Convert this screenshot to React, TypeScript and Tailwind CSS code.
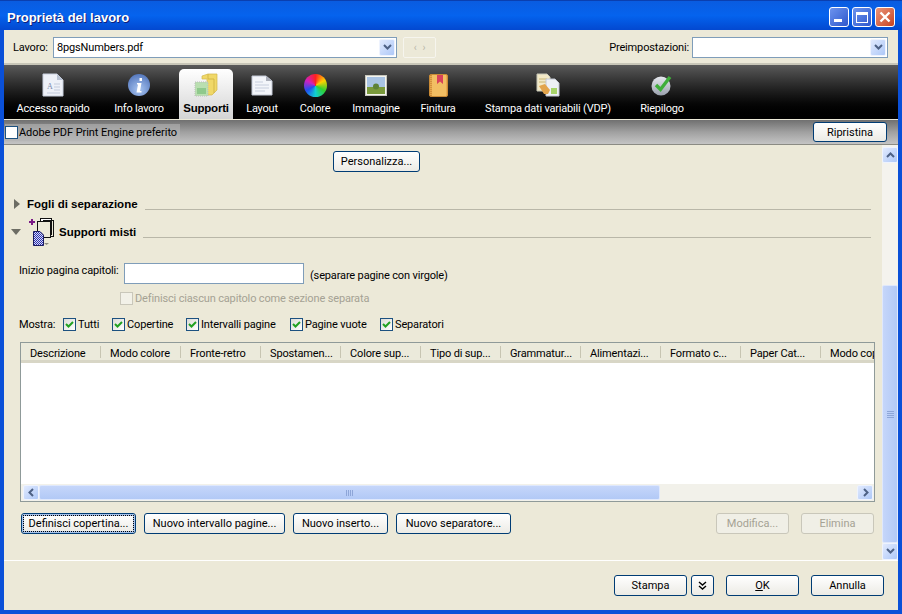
import type { ReactNode } from 'react'

const columns = ['Descrizione', 'Modo colore', 'Fronte-retro', 'Spostamen...', 'Colore sup...', 'Tipo di sup...', 'Grammatur...', 'Alimentazi...', 'Formato c...', 'Paper Cat...', 'Modo cop']

function XpButton({ children, className = '', disabled = false, focused = false }: { children: ReactNode; className?: string; disabled?: boolean; focused?: boolean }) {
  if (disabled) {
    return (
      <button className={`h-[21px] rounded-[3px] border border-[#c9c7ba] bg-[#f0efe6] text-[#a5a294] text-center tracking-normal ${className}`}>{children}</button>
    )
  }
  return (
    <button className={`h-[21px] rounded-[3px] border border-[#003c74] bg-gradient-to-b from-white to-[#ecebe5] text-black text-center tracking-normal ${focused ? 'outline-1 -outline-offset-3 outline-dotted outline-black shadow-[inset_0_0_0_2px_#a9c3ea]' : ''} ${className}`}>{children}</button>
  )
}

function Chevron({ dir }: { dir: 'up' | 'down' | 'left' | 'right' }) {
  const d = { down: 'M1 2 L4.5 5.5 L8 2', up: 'M1 6 L4.5 2.5 L8 6', left: 'M6 1 L2.5 4.5 L6 8', right: 'M3 1 L6.5 4.5 L3 8' }[dir]
  return (
    <svg width="9" height="9" viewBox="0 0 9 9">
      <path d={d} fill="none" stroke="#4d6185" strokeWidth="2" />
    </svg>
  )
}

function ArrowBtn({ dir, className = '' }: { dir: 'up' | 'down' | 'left' | 'right'; className?: string }) {
  return (
    <div className={`flex items-center justify-center rounded-[2px] border border-[#eef3fe] bg-gradient-to-br from-[#e1eafe] to-[#aec8f7] shrink-0 ${className}`}>
      <Chevron dir={dir} />
    </div>
  )
}

function Combo({ className = '', children }: { className?: string; children?: ReactNode }) {
  return (
    <div className={`h-[21px] flex items-center bg-white border border-[#7f9db9] pl-[3px] pr-px ${className}`}>
      <span className="flex-1">{children}</span>
      <ArrowBtn dir="down" className="w-[16px] h-[17px]" />
    </div>
  )
}

function Check({ label, className }: { label: string; className: string }) {
  return (
    <div className={`flex items-center gap-[2px] shrink-0 ${className}`}>
      <div className="w-[13px] h-[13px] border border-[#1c5180] bg-gradient-to-br from-[#dcdcd7] to-white flex items-center justify-center">
        <svg width="9" height="9" viewBox="0 0 9 9">
          <path d="M1 4 L3.5 6.5 L8 2" fill="none" stroke="#21a121" strokeWidth="2" />
        </svg>
      </div>
      <span>{label}</span>
    </div>
  )
}

function IconDocA() {
  return (
    <svg width="22" height="24" viewBox="0 0 22 24">
      <path d="M1 1 H15 L21 7 V23 H1 Z" fill="#eef1f8" stroke="#c9d0de" />
      <path d="M15 1 V7 H21 Z" fill="#b9c2d2" />
      <text x="5" y="16" fontSize="8" fontFamily="Liberation Serif, serif" fill="#7b8cae">A</text>
      <path d="M12 11 H18 M12 14 H18 M12 17 H18 M5 20 H18" stroke="#c3cbdc" />
    </svg>
  )
}

function IconInfo() {
  return (
    <svg width="24" height="24" viewBox="0 0 24 24">
      <defs>
        <radialGradient id="inf" cx="50%" cy="70%" r="70%">
          <stop offset="0" stopColor="#a9c6f2" />
          <stop offset="1" stopColor="#5578bd" />
        </radialGradient>
      </defs>
      <circle cx="12" cy="12" r="11" fill="url(#inf)" />
      <path d="M12.5 5 h2.5 v3 h-2.5 Z M10 10 h4.5 l-1.5 8 h1.5 v1.5 h-5 l1.5-8 h-1 Z" fill="#fff" />
    </svg>
  )
}

function IconSupports() {
  return (
    <svg width="24" height="24" viewBox="0 0 24 24">
      <path d="M8 3 L14 1 H23 V17 L18 22 H13 V6 H8 Z" fill="#f0d868" stroke="#d2b84a" strokeWidth="0.7" />
      <path d="M14 1 V6 L20 6 V20" fill="none" stroke="#c9ad3e" strokeWidth="0.7" />
      <rect x="1" y="9" width="13" height="14" fill="#b9dfb0" stroke="#bcbcbc" strokeDasharray="1 1" />
      <rect x="3" y="15" width="9" height="6" fill="#8fc98c" />
    </svg>
  )
}

function IconLayout() {
  return (
    <svg width="22" height="21" viewBox="0 0 22 21">
      <path d="M1 1 H15 L21 6 V20 H1 Z" fill="#f3f5fa" stroke="#c2c8d5" />
      <path d="M15 1 V6 H21 Z" fill="#a9adb8" />
      <path d="M4 7 H12 M4 10 H18 M4 13 H18 M4 16 H14" stroke="#c7cedd" />
    </svg>
  )
}

function IconImage() {
  return (
    <svg width="22" height="21" viewBox="0 0 22 21">
      <rect x="0.5" y="0.5" width="21" height="20" fill="#f4f4ee" stroke="#c7c7bd" />
      <rect x="2" y="2" width="18" height="17" fill="#a9c4e4" />
      <rect x="2" y="12" width="18" height="7" fill="#7a9a3c" />
      <circle cx="11" cy="11.5" r="3" fill="#5e8238" />
    </svg>
  )
}

function IconBook() {
  return (
    <svg width="19" height="23" viewBox="0 0 19 23">
      <rect x="0.5" y="0.5" width="18" height="22" rx="1.5" fill="#e9a94e" stroke="#c98a35" />
      <rect x="3" y="1" width="14" height="21" fill="#f2be63" />
      <path d="M2 1 V22" stroke="#b97a2c" strokeDasharray="1 1" />
      <path d="M8 1 H14 V10 L11 7.5 L8 10 Z" fill="#d8425a" />
    </svg>
  )
}

function IconVdp() {
  return (
    <svg width="24" height="24" viewBox="0 0 24 24">
      <path d="M1 1 H11 L14 4 V18 H1 Z" fill="#f3e9c6" stroke="#c8c8b8" />
      <path d="M3 6 H11 M3 9 H11" stroke="#c9b674" />
      <path d="M10 6 H19 L23 10 V23 H10 Z" fill="#eef1f6" stroke="#c4c8d2" />
      <rect x="15" y="15" width="6" height="6" fill="#a8d46a" />
      <path d="M3 13 L9 11 L14 17 L12 21 L8 21 Z" fill="#e2a44c" />
    </svg>
  )
}

function IconCheck() {
  return (
    <svg width="22" height="22" viewBox="0 0 22 22">
      <defs>
        <linearGradient id="chk" x1="0" y1="0" x2="0" y2="1">
          <stop offset="0" stopColor="#e6e8ee" />
          <stop offset="1" stopColor="#9aa1ad" />
        </linearGradient>
      </defs>
      <circle cx="10" cy="12" r="9.5" fill="url(#chk)" />
      <path d="M5 11 L9.5 15.5 L19 3" fill="none" stroke="#3fae3a" strokeWidth="3.4" />
    </svg>
  )
}

function IconMixed() {
  return (
    <svg width="28" height="28" viewBox="0 0 28 28">
      <defs>
        <pattern id="dither" width="2" height="2" patternUnits="userSpaceOnUse">
          <rect width="2" height="2" fill="#d8dcf4" />
          <rect width="1" height="1" fill="#2a2fb0" />
          <rect x="1" y="1" width="1" height="1" fill="#2a2fb0" />
        </pattern>
      </defs>
      <path d="M1 3 H3 V1 H5 V3 H7 V5 H5 V7 H3 V5 H1 Z" fill="#7b1a86" />
      <rect x="12.5" y="0.5" width="11" height="16" fill="#fff" stroke="#111" />
      <rect x="15.5" y="2.5" width="10" height="16" fill="none" stroke="#111" />
      <rect x="9.5" y="3.5" width="13" height="16" fill="#ece9d8" stroke="#111" />
      <path d="M5.5 13.5 H12 L15.5 17 V27.5 H5.5 Z" fill="url(#dither)" stroke="#1b1b60" />
      <path d="M16 25 H21 L18.5 27 Z" fill="#8a8a80" />
    </svg>
  )
}

const tabs = [
  { label: 'Accesso rapido', w: 'w-[98px]', icon: <IconDocA /> },
  { label: 'Info lavoro', w: 'w-[74px]', icon: <IconInfo /> },
  { label: 'Supporti', w: 'w-[60px]', icon: <IconSupports />, active: true },
  { label: 'Layout', w: 'w-[52px]', icon: <IconLayout /> },
  { label: 'Colore', w: 'w-[54px]', icon: <div className="w-[23px] h-[23px] rounded-full bg-[conic-gradient(#ff2020,#ffd000,#30d030,#10d0d0,#2050f0,#d020c0,#ff2020)]" /> },
  { label: 'Immagine', w: 'w-[68px]', icon: <IconImage /> },
  { label: 'Finitura', w: 'w-[56px]', icon: <IconBook /> },
  { label: 'Stampa dati variabili (VDP)', w: 'w-[164px]', icon: <IconVdp /> },
  { label: 'Riepilogo', w: 'w-[64px]', icon: <IconCheck /> },
]

export default function App() {
  return (
    <div className="w-[902px] h-[614px] overflow-hidden flex flex-col bg-[#0a50d8] text-[11px] leading-[13px] tracking-[-0.15px] text-black font-['Roboto',sans-serif]">
      {/* title bar */}
      <div className="h-[30px] shrink-0 flex items-center justify-between pl-[7px] pr-[7px] pt-[3px] border-t border-[#0a3fb0] bg-gradient-to-b from-[#0a5ce0] via-[#0563ee] to-[#0348d0]">
        <span className="text-white font-bold text-[13px] tracking-normal font-['Liberation_Sans',sans-serif] [text-shadow:1px_1px_#0f1f7a]">Proprietà del lavoro</span>
        <div className="flex gap-[3px]">
          <div className="w-[20px] h-[20px] rounded-[3px] border border-white bg-gradient-to-br from-[#6d93ee] to-[#2f57cc] flex items-end pl-[4px] pb-[4px]">
            <div className="w-[8px] h-[3px] bg-white" />
          </div>
          <div className="w-[20px] h-[20px] rounded-[3px] border border-white bg-gradient-to-br from-[#6d93ee] to-[#2f57cc] flex items-center justify-center">
            <div className="w-[12px] h-[11px] border border-white border-t-[3px]" />
          </div>
          <div className="w-[20px] h-[20px] rounded-[3px] border border-white bg-gradient-to-br from-[#e9957a] to-[#c8401c] flex items-center justify-center">
            <svg width="12" height="12" viewBox="0 0 12 12">
              <path d="M1.5 1.5 L10.5 10.5 M10.5 1.5 L1.5 10.5" stroke="#fff" strokeWidth="2.4" />
            </svg>
          </div>
        </div>
      </div>

      {/* client area */}
      <div className="flex-1 min-h-0 mx-[4px] mb-[4px] flex flex-col bg-[#ece9d8]">
        {/* job row */}
        <div className="h-[35px] shrink-0 flex items-center pt-[1px] pl-[9px] pr-[10px] border-b-2 border-[#c8c6b8]">
          <span className="w-[40px] shrink-0">Lavoro:</span>
          <Combo className="w-[344px]">8pgsNumbers.pdf</Combo>
          <div className="ml-[6px] w-[33px] h-[21px] rounded-[2px] border border-[#f6f5ee] flex items-center justify-center gap-[6px] text-[#b8b6a8] text-[10px]">
            <span>‹</span>
            <span>›</span>
          </div>
          <span className="ml-auto mr-[3px]">Preimpostazioni:</span>
          <Combo className="w-[196px]" />
        </div>

        {/* tabs */}
        <div className="h-[54px] shrink-0 flex bg-gradient-to-b from-[#5a5a5a] via-[#1c1c1c] to-black">
          {tabs.map(t => (
            <div key={t.label} className={`${t.w} flex flex-col items-center shrink-0`}>
              <div className={`mt-[4px] h-[50px] flex flex-col items-center justify-between pt-[3px] pb-[4px] tracking-[-0.2px] ${t.active ? 'w-[54px] rounded-t-[5px] bg-gradient-to-b from-white to-[#d4d4d4] text-black font-bold text-[11.5px] font-[\'Liberation_Sans\',sans-serif]' : 'text-white w-full'}`}>
                <div className="h-[26px] flex items-center justify-center">{t.icon}</div>
                <span className="whitespace-nowrap">{t.label}</span>
              </div>
            </div>
          ))}
        </div>

        {/* engine bar */}
        <div className="h-[25px] shrink-0 flex items-center pl-px pr-[11px] mt-px border-b border-[#8b8b83] bg-gradient-to-b from-[#707070] via-[#a0a0a0] to-[#c4c4c4]">
          <div className="flex items-center gap-px h-[17px] bg-[#b4b4b4]/60 pr-[3px] tracking-[-0.07px]">
            <div className="w-[13px] h-[13px] bg-white border border-[#1c5180]" />
            <span>Adobe PDF Print Engine preferito</span>
          </div>
          <XpButton className="ml-auto w-[74px] !h-[20px]">Ripristina</XpButton>
        </div>

        {/* scrolling content */}
        <div className="flex-1 min-h-0 flex">
          <div className="flex-1 min-w-0 flex flex-col pl-[16px] pr-[7px] pt-[6px]">
            <div className="ml-[313px]">
              <XpButton className="w-[87px]">Personalizza...</XpButton>
            </div>

            <div className="mt-[25px] flex items-center -ml-[6px] h-[14px] shrink-0">
              <svg width="6" height="10" viewBox="0 0 6 10" className="mr-[7px]"><path d="M0 0 L6 5 L0 10 Z" fill="#6d6d64" /></svg>
              <b className="font-bold text-[11.5px] tracking-normal font-['Liberation_Sans',sans-serif]">Fogli di separazione</b>
              <div className="flex-1 ml-[7px] mr-[4px] mt-[10px] h-px bg-[#b9b7a8]" />
            </div>

            <div className="mt-[7px] flex items-center -ml-[9px] h-[28px] shrink-0">
              <svg width="10" height="6" viewBox="0 0 10 6" className="mr-[7px]"><path d="M0 0 H10 L5 6 Z" fill="#6d6d64" /></svg>
              <IconMixed />
              <b className="font-bold ml-[3px] text-[11.5px] tracking-normal font-['Liberation_Sans',sans-serif]">Supporti misti</b>
              <div className="flex-1 ml-[7px] mr-[4px] mt-[10px] h-px bg-[#b9b7a8]" />
            </div>

            <div className="mt-[17px] flex">
              <span className="-ml-px pt-[1px] w-[105px] whitespace-nowrap">Inizio pagina capitoli:</span>
              <div className="w-[180px] h-[21px] bg-white border border-[#7f9db9]" />
              <span className="ml-[6px] pt-[6px]">(separare pagine con virgole)</span>
            </div>

            <div className="mt-[8px] pl-[100px] flex items-center gap-[2px] text-[#a5a294]">
              <div className="w-[13px] h-[13px] bg-[#f2f1e8] border border-[#c9c7ba]" />
              <span>Definisci ciascun capitolo come sezione separata</span>
            </div>

            <div className="mt-[13px] -ml-px flex items-center">
              <span className="w-[44px] shrink-0">Mostra:</span>
              <Check label="Tutti" className="w-[49px]" />
              <Check label="Copertine" className="w-[74px]" />
              <Check label="Intervalli pagine" className="w-[104px]" />
              <Check label="Pagine vuote" className="w-[90px]" />
              <Check label="Separatori" className="w-[80px]" />
            </div>

            {/* table */}
            <div className="mt-[11px] h-[160px] shrink-0 border border-[#8f9a99] flex flex-col">
              <div className="h-[20px] shrink-0 flex overflow-hidden bg-[#ebeadb] border-b-[3px] border-[#d8d6c6]">
                {columns.map(c => (
                  <div key={c} className="w-[80px] shrink-0 pl-[9px] pt-[4px] whitespace-nowrap overflow-hidden relative">
                    {c}
                    <div className="absolute right-0 top-[3px] h-[12px] w-px bg-[#c7c5b2]" />
                  </div>
                ))}
              </div>
              <div className="flex-1 bg-white" />
              <div className="h-[17px] shrink-0 flex bg-[#f2f1ea] p-px">
                <ArrowBtn dir="left" className="w-[16px] ml-px" />
                <div className="w-[621px] rounded-[2px] border border-[#dfe8fc] bg-gradient-to-b from-[#c5d6fa] to-[#b2c9f6] flex items-center justify-center">
                  <div className="w-[7px] h-[6px] bg-[repeating-linear-gradient(90deg,#8ea6d8_0,#8ea6d8_1px,transparent_1px,transparent_2px)]" />
                </div>
                <div className="flex-1" />
                <ArrowBtn dir="right" className="w-[16px]" />
              </div>
            </div>

            {/* action buttons */}
            <div className="mt-[11px] flex gap-[8px] ml-px">
              <XpButton focused className="w-[115px]">Definisci copertina...</XpButton>
              <XpButton className="w-[141px]">Nuovo intervallo pagine...</XpButton>
              <XpButton className="w-[95px]">Nuovo inserto...</XpButton>
              <XpButton className="w-[115px]">Nuovo separatore...</XpButton>
              <XpButton disabled className="ml-auto w-[73px]">Modifica...</XpButton>
              <XpButton disabled className="ml-[4px] w-[73px] mr-[1px]">Elimina</XpButton>
            </div>
          </div>

          {/* vertical scrollbar */}
          <div className="w-[16px] shrink-0 flex flex-col bg-[#f4f3ee] pt-[2px]">
            <ArrowBtn dir="up" className="h-[16px]" />
            <div className="flex-1 flex flex-col justify-end">
              <div className="h-[258px] rounded-[2px] border border-[#dfe8fc] bg-gradient-to-r from-[#c5d6fa] to-[#b2c9f6] flex items-center justify-center">
                <div className="w-[7px] h-[7px] bg-[repeating-linear-gradient(0deg,#8ea6d8_0,#8ea6d8_1px,transparent_1px,transparent_2px)]" />
              </div>
            </div>
            <ArrowBtn dir="down" className="h-[17px]" />
          </div>
        </div>

        {/* footer */}
        <div className="h-[50px] shrink-0 flex items-start justify-end pt-[14px] pr-[14px] border-t border-white">
          <XpButton className="w-[73px]">Stampa</XpButton>
          <XpButton className="ml-[4px] w-[23px] flex items-center justify-center">
            <svg width="9" height="9" viewBox="0 0 9 9"><path d="M1 1 L4.5 4 L8 1 M1 5 L4.5 8 L8 5" fill="none" stroke="#000" strokeWidth="1.4" /></svg>
          </XpButton>
          <XpButton className="ml-[12px] w-[73px]"><u>O</u>K</XpButton>
          <XpButton className="ml-[12px] w-[73px]">Annulla</XpButton>
        </div>
      </div>
    </div>
  )
}
